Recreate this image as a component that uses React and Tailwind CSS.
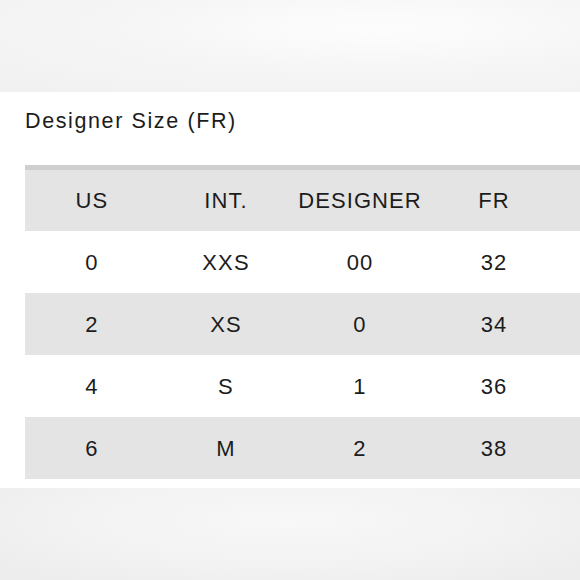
const rows = [
  ["0", "XXS", "00", "32"],
  ["2", "XS", "0", "34"],
  ["4", "S", "1", "36"],
  ["6", "M", "2", "38"],
];

const cols = ["US", "INT.", "DESIGNER", "FR"];

function Row({ cells, shaded, header }) {
  return (
    <div
      className={`flex items-center ${header ? "h-[61px]" : "h-[62px]"} ${
        shaded ? "bg-[#e4e4e4]" : "bg-white"
      }`}
    >
      {cells.map((c, i) => (
        <div key={i} className="w-[134px] shrink-0 text-center">
          {c}
        </div>
      ))}
      <div className="flex-1" />
    </div>
  );
}

export default function App() {
  return (
    <div className="w-[580px] h-[580px] overflow-hidden bg-white font-['Liberation_Sans',Arial,sans-serif] text-[#1c1c1c]">
      <div className="h-[92px] bg-[radial-gradient(ellipse_at_65%_30%,#fdfdfd_0%,#f6f6f6_45%,#f0f0f0_100%)]" />

      <div className="h-[396px] bg-white pt-[12px]">
        <div className="pl-[25px] h-[34px] leading-[34px] text-[21.5px] tracking-[0.075em]">
          Designer Size (FR)
        </div>

        <div className="ml-[25px] mt-[27px] w-[600px] border-t-[5px] border-[#cfcfcf] text-[22px] tracking-[0.05em]">
          <Row cells={cols} shaded header />
          {rows.map((r, i) => (
            <Row key={i} cells={r} shaded={i % 2 === 1} />
          ))}
        </div>
      </div>

      <div className="h-[92px] bg-[radial-gradient(ellipse_at_50%_35%,#f8f8f8_0%,#f2f2f2_55%,#ececec_100%)]" />
    </div>
  );
}
